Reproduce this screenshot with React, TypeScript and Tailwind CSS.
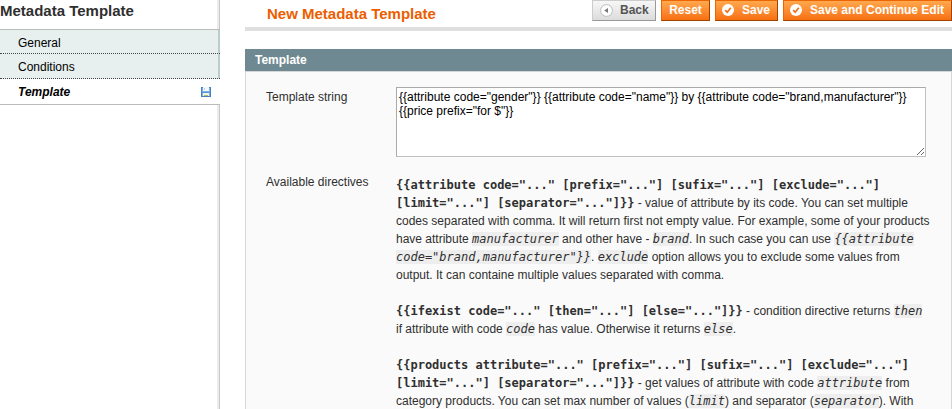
import type { ReactNode } from "react";

const Code = ({ children }: { children: ReactNode }) => (
  <code className="bg-[#eee] font-['DejaVu_Sans_Mono',monospace] text-[12px] italic">{children}</code>
);

const Directive = ({ children }: { children: ReactNode }) => (
  <b className="font-['DejaVu_Sans_Mono',monospace] text-[12px] font-bold">{children}</b>
);

const Line = ({ children }: { children?: ReactNode }) => (
  <div className="h-[18px] whitespace-nowrap leading-[18px]">{children}</div>
);

const CheckIcon = () => (
  <svg className="mt-[3px] h-[12px] w-[12px] shrink-0" viewBox="0 0 12 12">
    <circle cx="6" cy="6" r="6" fill="#fff" />
    <path d="M3.2 6.2l2 2 3.6-4.5" fill="none" stroke="#f0711a" strokeWidth="1.7" />
  </svg>
);

const BackIcon = () => (
  <svg className="mt-[3px] h-[13px] w-[13px] shrink-0" viewBox="0 0 13 13">
    <circle cx="6.5" cy="6.5" r="5.9" fill="#fff" stroke="#bdbdbd" />
    <path d="M8 4v5L4.2 6.5z" fill="#777" />
  </svg>
);

const FloppyIcon = () => (
  <svg className="h-[10px] w-[10px]" viewBox="0 0 10 10" shapeRendering="crispEdges">
    <path fill="#4a7fc4" d="M0 0h10v10H0z" />
    <path fill="#7db0e6" d="M1 1h8v8H1z" />
    <path fill="#f4f8fd" d="M2 0h6v4H2z" />
    <path fill="#b8cfec" d="M3 1h1v2H3z" />
    <path fill="#5f94d6" d="M1 5h8v1H1z" />
    <path fill="#eef4e4" d="M2 6h6v3H2z" />
    <path fill="#a3c46c" d="M3 8h4v1H3z" />
  </svg>
);

const tab = "border-b border-dotted border-[#444] bg-[#e7efef]";
const tabLabel = "block h-full border-r-2 border-solid border-[#bccccc] pl-[18px] leading-[26px]";

const orange =
  "flex h-[21px] shrink-0 border border-t-[#ed6502] border-r-[#a04300] border-b-[#a04300] border-l-[#ed6502] bg-linear-to-b from-[#ffa84c] to-[#f76f0c] leading-[18px] text-white";

export default function App() {
  return (
    <div className="flex h-[409px] w-[952px] overflow-hidden bg-white font-['Liberation_Sans',Arial,sans-serif] text-[12px] text-[#2f2f2f]">
      <aside className="flex w-[220px] shrink-0 flex-col">
        <div className="h-[29px] border-r border-[#c8c8c8]">
          <h3 className="h-full border-r-2 border-[#ececec] text-[15px] leading-[22px] font-bold">Metadata Template</h3>
        </div>
        <ul className="border-y border-[#b9bdb9] text-black">
          <li className={`${tab} h-6`}>
            <span className={tabLabel}>General</span>
          </li>
          <li className={`${tab} h-[25px]`}>
            <span className={tabLabel}>Conditions</span>
          </li>
          <li className="flex h-[25px] items-center justify-between pr-[9px] pl-[18px] font-bold italic">
            Template
            <FloppyIcon />
          </li>
        </ul>
        <div className="flex-1 border-r border-[#c8c8c8]">
          <div className="h-full border-r-2 border-[#ececec]" />
        </div>
      </aside>

      <main className="ml-[25px] w-[707px] shrink-0">
        <header className="flex h-[31px] justify-between border-b-4 border-[#dfdfdf] pl-[22px]">
          <h1 className="text-[15px] leading-[28px] font-bold text-[#eb5e00]">New Metadata Template</h1>
          <div className="flex gap-[5px] text-[12px] font-bold">
            <button className="flex h-[21px] w-16 border border-[#ccc] border-r-[#999] border-b-[#999] bg-linear-to-b from-[#f7f7f7] to-[#dcdcdc] pl-[7px] leading-[18px] text-[#555]">
              <BackIcon />
              <span className="ml-[7px]">Back</span>
            </button>
            <button className={`${orange} w-[49px] justify-center`}>Reset</button>
            <button className={`${orange} w-[63px] pl-[6px]`}>
              <CheckIcon />
              <span className="ml-[8px]">Save</span>
            </button>
            <button className={`${orange} w-[169px] pl-[6px]`}>
              <CheckIcon />
              <span className="ml-[8px] whitespace-nowrap">Save and Continue Edit</span>
            </button>
          </div>
        </header>

        <h2 className="mt-[18px] h-[22px] bg-[#6f8992] pl-[10px] leading-[22px] font-bold text-white">Template</h2>
        <section className="h-[360px] border border-[#d6d6d6] bg-[#fafafa] pl-5">
          <div className="flex pt-[15px]">
            <label className="w-[130px] shrink-0 pt-[3px] leading-[14px]">Template string</label>
            <textarea
              className="block h-[70px] w-[530px] resize border border-[#c0c0c0] border-t-[#aaa] border-l-[#aaa] bg-white p-[2px] text-[12px] leading-[14px] text-black"
              defaultValue={'{{attribute code="gender"}} {{attribute code="name"}} by {{attribute code="brand,manufacturer"}}\n{{price prefix="for $"}}'}
            />
          </div>
          <div className="mt-[18px] flex">
            <div className="w-[130px] shrink-0 leading-[14px]">Available directives</div>
            <div className="pt-[1px]">
              <Line><Directive>{'{{attribute code="..." [prefix="..."] [sufix="..."] [exclude="..."]'}</Directive></Line>
              <Line><Directive>{'[limit="..."] [separator="..."]}}'}</Directive> - value of attribute by its code. You can set multiple</Line>
              <Line>codes separated with comma. It will return first not empty value. For example, some of your products</Line>
              <Line>have attribute <Code>manufacturer</Code> and other have - <Code>brand</Code>. In such case you can use <Code>{"{{attribute"}</Code></Line>
              <Line><Code>{'code="brand,manufacturer"}}'}</Code>. <Code>exclude</Code> option allows you to exclude some values from</Line>
              <Line>output. It can containe multiple values separated with comma.</Line>
              <Line />
              <Line><Directive>{'{{ifexist code="..." [then="..."] [else="..."]}}'}</Directive> - condition directive returns <Code>then</Code></Line>
              <Line>if attribute with code <Code>code</Code> has value. Otherwise it returns <Code>else</Code>.</Line>
              <Line />
              <Line><Directive>{'{{products attribute="..." [prefix="..."] [sufix="..."] [exclude="..."]'}</Directive></Line>
              <Line><Directive>{'[limit="..."] [separator="..."]}}'}</Directive> - get values of attribute with code <Code>attribute</Code> from</Line>
              <Line>category products. You can set max number of values (<Code>limit</Code>) and separator (<Code>separator</Code>). With</Line>
            </div>
          </div>
        </section>
      </main>
    </div>
  );
}
